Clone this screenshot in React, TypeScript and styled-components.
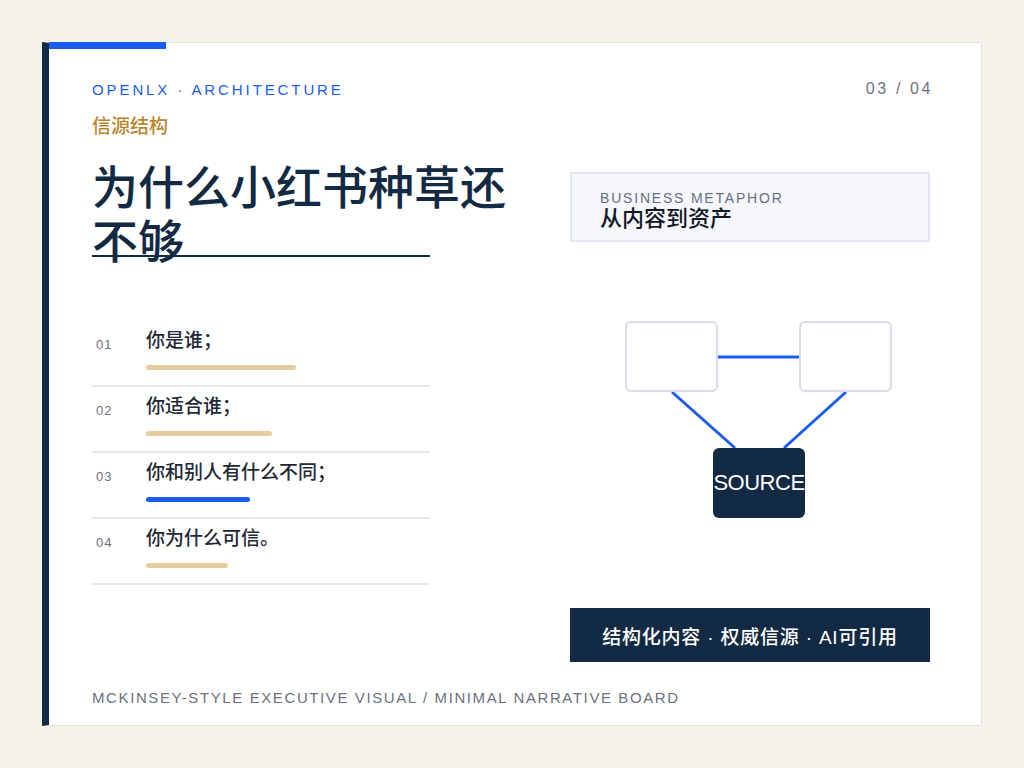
import React from "react";
import styled, { createGlobalStyle } from "styled-components";

const Global = createGlobalStyle`
  body { margin: 0; background: #f5f2ec; font-family: "Liberation Sans", "Noto Sans CJK SC", sans-serif; }
`;

const items = [
  { no: "01", text: "你是谁；", bar: 150, blue: false },
  { no: "02", text: "你适合谁；", bar: 126, blue: false },
  { no: "03", text: "你和别人有什么不同；", bar: 104, blue: true },
  { no: "04", text: "你为什么可信。", bar: 82, blue: false },
];

const App = () => (
  <>
    <Global />
    <Page>
      <Card>
        <TopAccent />
        <HeaderRow>
          <Kicker>OPENLX · ARCHITECTURE</Kicker>
          <PageNo>03 / 04</PageNo>
        </HeaderRow>
        <Section>信源结构</Section>
        <Body>
          <Left>
            <Title>为什么小红书种草还不够</Title>
            <TitleRule />
            <List>
              {items.map((it) => (
                <Row key={it.no}>
                  <Num>{it.no}</Num>
                  <RowMain>
                    <RowText>{it.text}</RowText>
                    <Bar $blue={it.blue} style={{ width: it.bar }} />
                  </RowMain>
                </Row>
              ))}
            </List>
          </Left>
          <Right>
            <Metaphor>
              <MetaLabel>BUSINESS METAPHOR</MetaLabel>
              <MetaTitle>从内容到资产</MetaTitle>
            </Metaphor>
            <Diagram>
              <svg width="360" height="200" style={{ position: "absolute", left: 0, top: 0 }}>
                <line x1="148" y1="36" x2="230" y2="36" stroke="#1a5cf0" strokeWidth="3" />
                <line x1="102" y1="71" x2="165" y2="127" stroke="#1a5cf0" strokeWidth="3" />
                <line x1="276" y1="71" x2="214" y2="127" stroke="#1a5cf0" strokeWidth="3" />
              </svg>
              <Node style={{ left: 55, top: 0 }} />
              <Node style={{ left: 229, top: 0 }} />
              <Source style={{ left: 143, top: 127 }}>SOURCE</Source>
            </Diagram>
            <Tagline>结构化内容 · 权威信源 · AI可引用</Tagline>
          </Right>
        </Body>
        <Footer>MCKINSEY-STYLE EXECUTIVE VISUAL / MINIMAL NARRATIVE BOARD</Footer>
      </Card>
    </Page>
  </>
);

const Page = styled.div`
  padding: 42px;
`;

const Card = styled.div`
  position: relative;
  height: 684px;
  box-sizing: border-box;
  background: #fff;
  border: 1px solid #e6e1d6;
  border-left: 7px solid #132a44;
  padding: 36px 50px 0 43px;
`;

const TopAccent = styled.div`
  position: absolute;
  left: 0;
  top: -1px;
  width: 117px;
  height: 7px;
  background: #1a5cf0;
`;

const HeaderRow = styled.div`
  display: flex;
  justify-content: space-between;
  align-items: center;
  height: 20px;
`;

const Kicker = styled.div`
  color: #1a5cf0;
  font-size: 15px;
  letter-spacing: 2.9px;
`;

const PageNo = styled.div`
  color: #6b7280;
  font-size: 16px;
  letter-spacing: 2.6px;
  margin-right: -2px;
`;

const Section = styled.div`
  margin-top: 12px;
  color: #b8862f;
  font-size: 19px;
  font-weight: 500;
`;

const Body = styled.div`
  display: grid;
  grid-template-columns: 338px 1fr;
  column-gap: 140px;
`;

const Left = styled.div``;

const Title = styled.h1`
  margin: 23px 0 0;
  width: 420px;
  font-size: 46px;
  line-height: 54px;
  font-weight: 500;
  color: #132a44;
`;

const TitleRule = styled.div`
  margin-top: -14px;
  width: 338px;
  height: 2px;
  background: #132a44;
  position: relative;
`;

const List = styled.div`
  margin-top: 64px;
`;

const Row = styled.div`
  display: flex;
  align-items: flex-start;
  height: 66px;
  border-bottom: 2px solid #e8e8e8;
  box-sizing: border-box;
  padding-top: 7px;
`;

const Num = styled.div`
  width: 50px;
  padding-left: 4px;
  padding-top: 9px;
  font-size: 13px;
  color: #6b7280;
  letter-spacing: 1px;
`;

const RowMain = styled.div`
  display: flex;
  flex-direction: column;
  gap: 11px;
`;

const RowText = styled.div`
  font-size: 19px;
  font-weight: 500;
  color: #1f2937;
  line-height: 26px;
`;

const Bar = styled.div<{ $blue: boolean }>`
  height: 5px;
  border-radius: 3px;
  background: ${(p) => (p.$blue ? "#1a5cf0" : "#e3cc9e")};
`;

const Right = styled.div`
  display: flex;
  flex-direction: column;
  width: 360px;
`;

const Metaphor = styled.div`
  margin-top: 34px;
  height: 70px;
  box-sizing: border-box;
  background: #f5f7fb;
  border: 2px solid #e2e7f0;
  padding: 16px 28px 0;
`;

const MetaLabel = styled.div`
  font-size: 14px;
  color: #667085;
  letter-spacing: 1.8px;
`;

const MetaTitle = styled.div`
  font-size: 22px;
  font-weight: 500;
  color: #111827;
  line-height: 26px;
`;

const Diagram = styled.div`
  position: relative;
  margin-top: 79px;
  height: 196px;
`;

const Node = styled.div`
  position: absolute;
  width: 93px;
  height: 71px;
  box-sizing: border-box;
  background: #fff;
  border: 2px solid #d8dde8;
  border-radius: 6px;
`;

const Source = styled.div`
  position: absolute;
  width: 92px;
  height: 70px;
  background: #132a44;
  border-radius: 6px;
  color: #fff;
  font-size: 22px;
  display: flex;
  align-items: center;
  justify-content: center;
  letter-spacing: -0.5px;
`;

const Tagline = styled.div`
  margin-top: 91px;
  height: 54px;
  background: #132a44;
  color: #fff;
  font-size: 19px;
  font-weight: 500;
  letter-spacing: 0.8px;
  display: flex;
  align-items: center;
  justify-content: center;
`;

const Footer = styled.div`
  position: absolute;
  left: 43px;
  bottom: 19px;
  font-size: 15px;
  color: #6b7280;
  letter-spacing: 1.6px;
`;

export default App;
